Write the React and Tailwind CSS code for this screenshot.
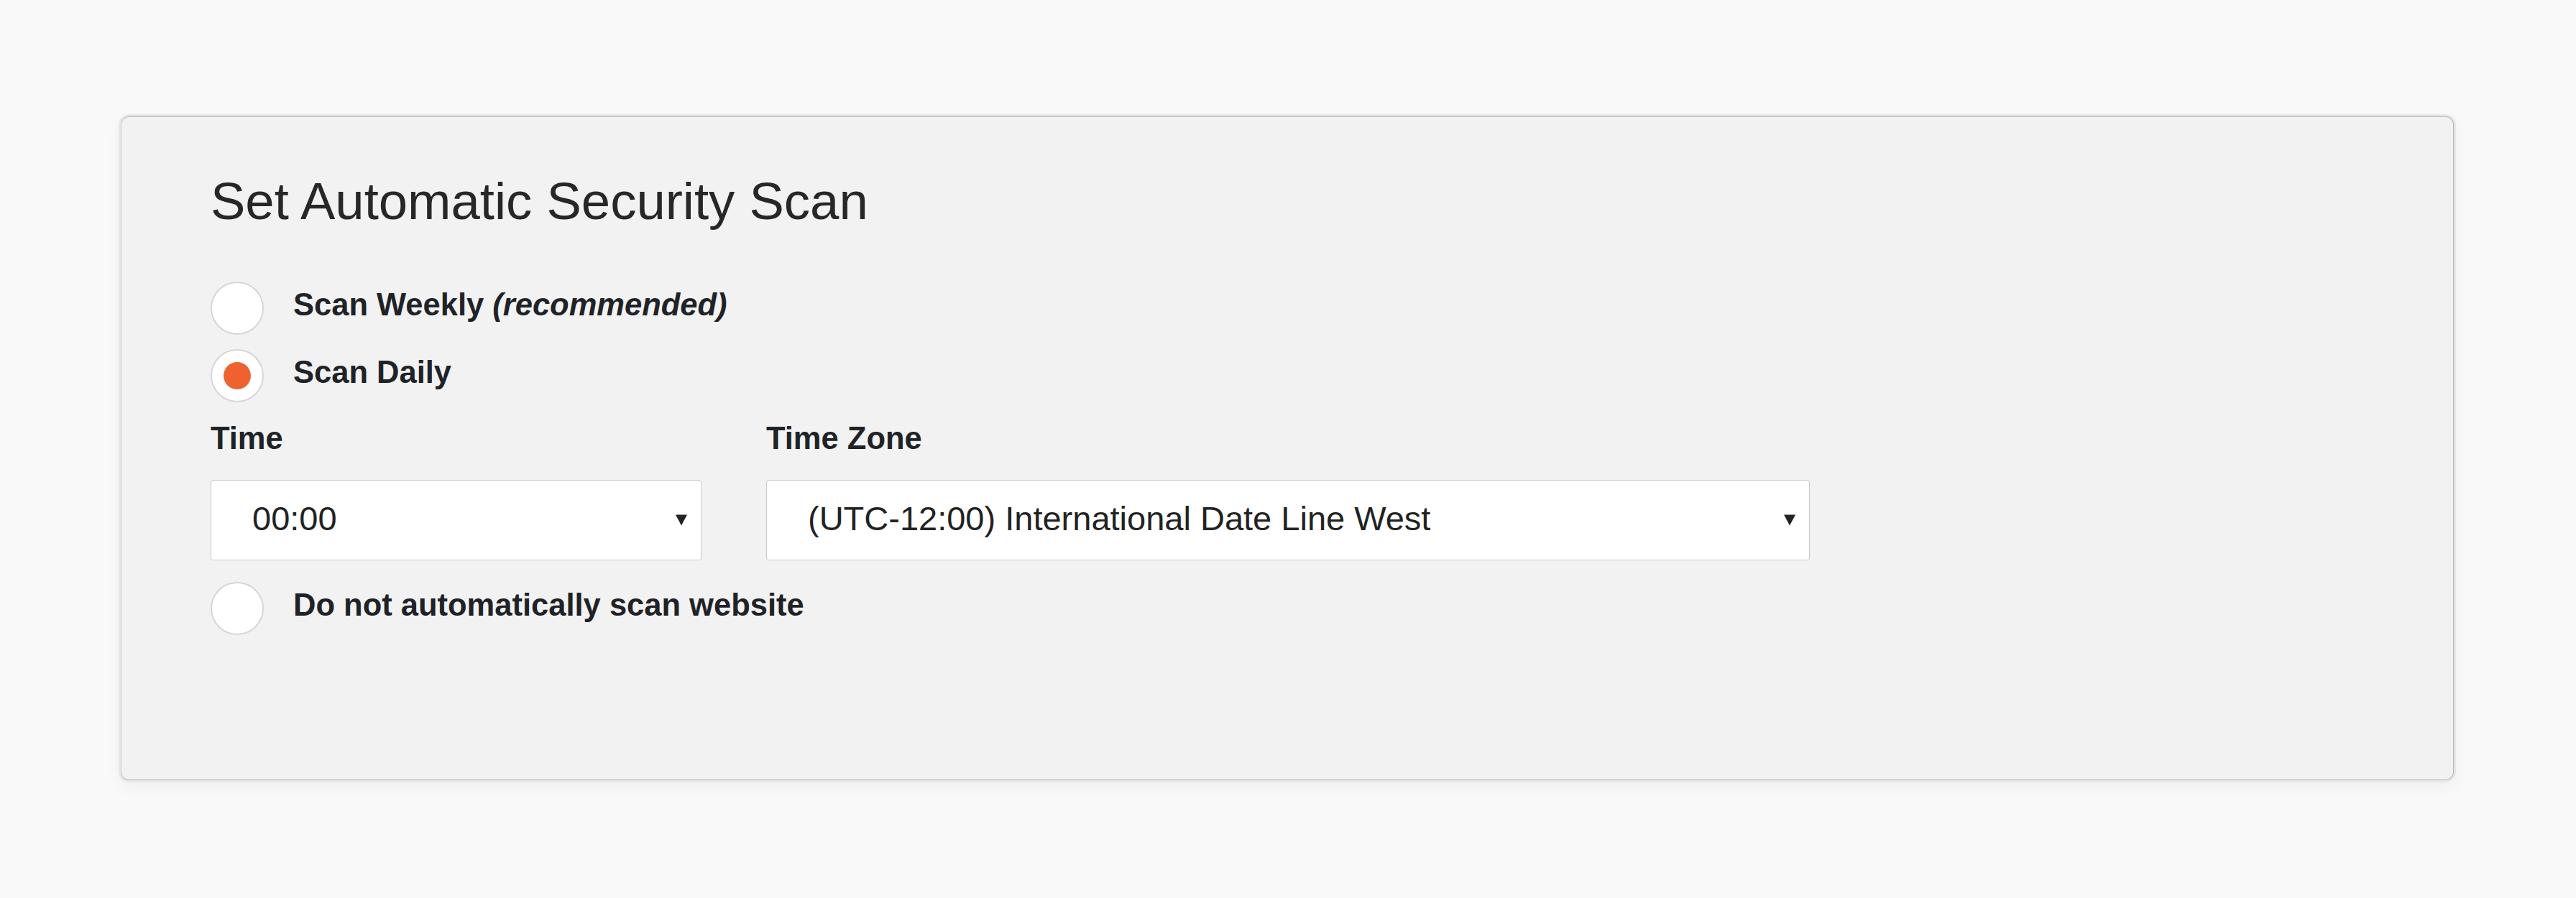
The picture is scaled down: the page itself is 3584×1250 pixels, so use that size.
import { useState } from 'react'

const font = { fontFamily: '"Liberation Sans", Arial, sans-serif' }

function Radio({ checked, onClick, children }) {
    return (
        <button type="button" onClick={onClick} className="flex items-center h-[74px] text-left">
            <span className="w-[74px] h-[74px] rounded-full bg-white border-2 border-[#d6d6d6] flex items-center justify-center shrink-0">
                {checked && <span className="w-[38px] h-[38px] rounded-full bg-[#ef6230]" />}
            </span>
            <span className="ml-[41px] pb-[10px] text-[43.5px] leading-[1.2] font-bold text-[#1f2328]">{children}</span>
        </button>
    )
}

function Select({ value, className }) {
    return (
        <div className={`relative h-[112px] bg-white border border-[#c9c9c9] rounded-[3px] flex items-center pl-[57px] ${className}`}>
            <span className="pb-[6px] text-[47px] leading-none text-[#222]">{value}</span>
            <svg className="absolute right-[19px] top-1/2 -translate-y-1/2" width="16" height="17" viewBox="0 0 16 17">
                <polygon points="0,1 16,1 8,16" fill="#222" />
            </svg>
        </div>
    )
}

export default function App() {
    const [mode, setMode] = useState('daily')

    return (
        <div style={font} className="w-full h-[1250px] bg-[#f9f9f9] pt-[162px] pl-[168px] pr-[170px]">
            <div className="h-[924px] bg-[#f2f2f2] border border-[#b1b7bb] border-l-[#c9cccf] rounded-[12px] shadow-[0_0_0_3px_#e6e6e6,0_8px_24px_rgba(0,0,0,0.05)] pl-[124px] pt-[73px]">
                <h2 className="text-[72.5px] leading-[1.2] font-normal text-[#272727]">Set Automatic Security Scan</h2>

                <div className="mt-[69px] flex flex-col gap-[20px]">
                    <Radio checked={mode === 'weekly'} onClick={() => setMode('weekly')}>
                        Scan Weekly <em className="italic">(recommended)</em>
                    </Radio>
                    <Radio checked={mode === 'daily'} onClick={() => setMode('daily')}>
                        Scan Daily
                    </Radio>
                </div>

                <div className="mt-[24px] flex gap-[90px]">
                    <div className="flex flex-col">
                        <label className="text-[43.5px] leading-[1.2] font-bold text-[#1f2328] mb-[32px]">Time</label>
                        <Select value="00:00" className="w-[683px]" />
                    </div>
                    <div className="flex flex-col">
                        <label className="text-[43.5px] leading-[1.2] font-bold text-[#1f2328] mb-[32px]">Time Zone</label>
                        <Select value="(UTC-12:00) International Date Line West" className="w-[1452px]" />
                    </div>
                </div>

                <div className="mt-[30px]">
                    <Radio checked={mode === 'none'} onClick={() => setMode('none')}>
                        Do not automatically scan website
                    </Radio>
                </div>
            </div>
        </div>
    )
}
